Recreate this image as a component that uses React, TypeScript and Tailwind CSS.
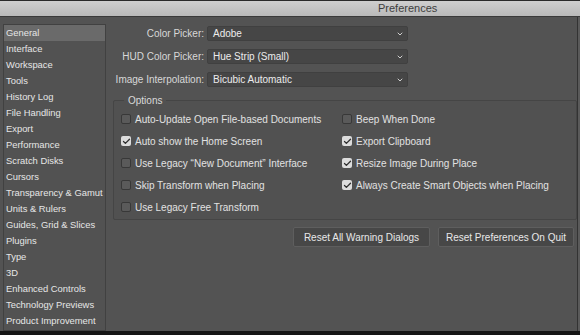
import { ChevronDown, Check } from "lucide-react";

const sections = [
  "General",
  "Interface",
  "Workspace",
  "Tools",
  "History Log",
  "File Handling",
  "Export",
  "Performance",
  "Scratch Disks",
  "Cursors",
  "Transparency & Gamut",
  "Units & Rulers",
  "Guides, Grid & Slices",
  "Plugins",
  "Type",
  "3D",
  "Enhanced Controls",
  "Technology Previews",
  "Product Improvement",
];

const pickers = [
  { label: "Color Picker:", value: "Adobe" },
  { label: "HUD Color Picker:", value: "Hue Strip (Small)" },
  { label: "Image Interpolation:", value: "Bicubic Automatic" },
];

const leftOptions = [
  { label: "Auto-Update Open File-based Documents", on: false },
  { label: "Auto show the Home Screen", on: true },
  { label: "Use Legacy \u201cNew Document\u201d Interface", on: false },
  { label: "Skip Transform when Placing", on: false },
  { label: "Use Legacy Free Transform", on: false },
];

const rightOptions = [
  { label: "Beep When Done", on: false },
  { label: "Export Clipboard", on: true },
  { label: "Resize Image During Place", on: true },
  { label: "Always Create Smart Objects when Placing", on: true },
];

function Option({ label, on }: { label: string; on: boolean }) {
  return (
    <div className="flex h-[22px] items-center gap-[4px]">
      {on ? (
        <span className="flex h-[10px] w-[10px] items-center justify-center rounded-[2px] bg-[#dcdcdc]">
          <Check size={9} strokeWidth={3.5} className="text-[#2f2f2f]" />
        </span>
      ) : (
        <span className="h-[10px] w-[10px] rounded-[2px] border border-[#383838] bg-[#5a5a5a]" />
      )}
      <span className="text-[10px] text-[#e2e2e2]">{label}</span>
    </div>
  );
}

export default function App() {
  return (
    <div
      className="flex h-[335px] w-[580px] flex-col overflow-hidden border-t border-b-[4px] border-t-[#2a2a2a] border-b-[#151515] bg-[#5a5a5a]"
      style={{ fontFamily: '"Liberation Sans", Arial, sans-serif' }}
    >
      <div className="flex h-[16px] shrink-0 items-center border-b border-[#3a3a3a] bg-linear-to-b from-[#cfcfcf] to-[#b9b9b9] pl-[378px] text-[11px] text-[#3e3e3e]">
        Preferences
      </div>

      <div className="mr-[2px] flex min-h-0 flex-1 border-r border-[#333] bg-[#535353]">
        <div className="ml-[3px] mt-[7px] w-[103px] shrink-0 border border-[#414141] bg-[#525252]">
          {sections.map((name, i) => (
            <div
              key={name}
              className={
                "flex h-[16px] items-center pl-[2px] text-[9.4px] text-[#e6e6e6] " +
                (i === 0 ? "bg-[#6a6a6a]" : "")
              }
            >
              {name}
            </div>
          ))}
        </div>

        <div className="flex flex-1 flex-col pt-[9px]">
          <div className="grid grid-cols-[98px_201px] gap-x-[3px] gap-y-[8px]">
            {pickers.map((p) => (
              <div key={p.label} className="contents">
                <div className="flex h-[15px] items-center justify-end text-[10px] text-[#d8d8d8]">
                  {p.label}
                </div>
                <div className="flex h-[15px] items-center justify-between rounded-[2px] border border-[#404040] bg-[#464646] pl-[5px] pr-[3px] text-[10px] text-[#ececec]">
                  {p.value}
                  <ChevronDown size={8} strokeWidth={3} className="text-[#cfcfcf]" />
                </div>
              </div>
            ))}
          </div>

          <fieldset className="ml-[7px] mt-[7px] rounded-[2px] border border-[#454545] bg-[#515151] pb-[1px] pl-[7px] pt-[1px]">
            <legend className="ml-[3px] px-[4px] text-[10px] leading-[13px] text-[#dadada]">
              Options
            </legend>
            <div className="grid grid-cols-[221px_1fr]">
              <div className="flex flex-col">
                {leftOptions.map((o) => (
                  <Option key={o.label} {...o} />
                ))}
              </div>
              <div className="flex flex-col">
                {rightOptions.map((o) => (
                  <Option key={o.label} {...o} />
                ))}
              </div>
            </div>
          </fieldset>

          <div className="mt-[7px] flex justify-end gap-[8px] pr-[3px]">
            <button className="h-[20px] w-[137px] rounded-[2px] border border-[#5e5e5e] bg-[#474747] text-[10px] text-[#e8e8e8]">
              Reset All Warning Dialogs
            </button>
            <button className="h-[20px] w-[136px] rounded-[2px] border border-[#5e5e5e] bg-[#474747] text-[10px] text-[#e8e8e8]">
              Reset Preferences On Quit
            </button>
          </div>
        </div>
      </div>
    </div>
  );
}
